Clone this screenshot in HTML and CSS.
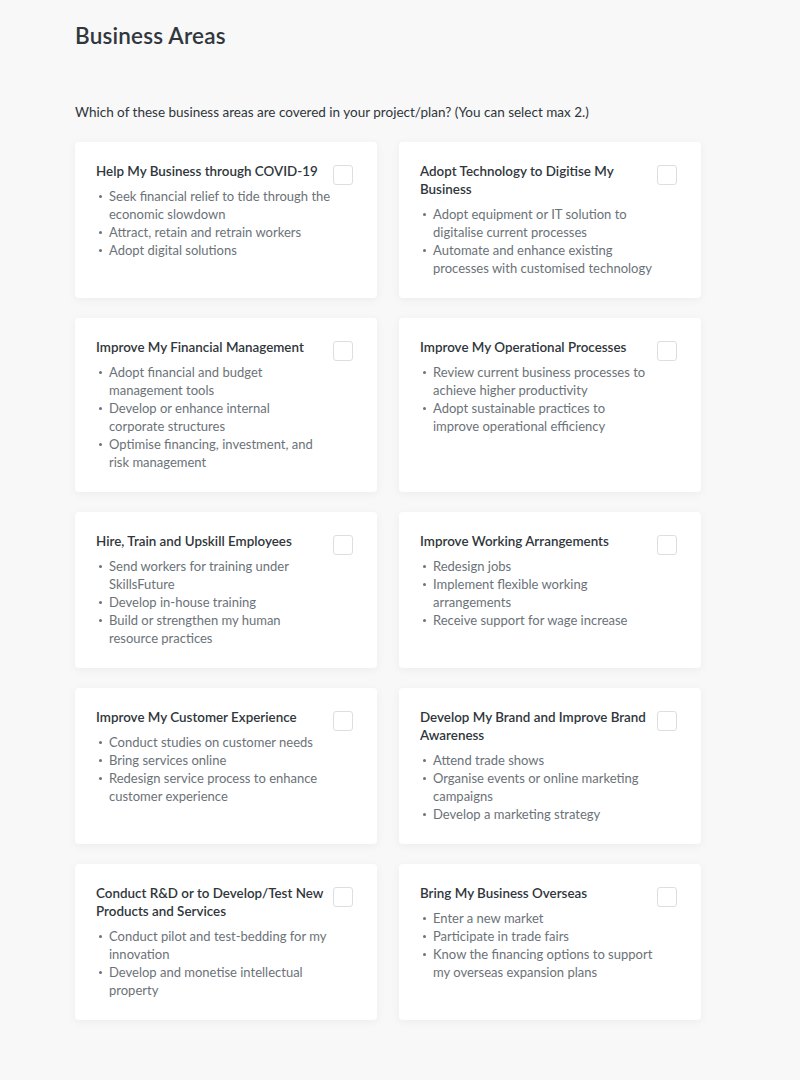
FILE: index.html
```html
<!DOCTYPE html>
<html lang="en">
<head>
<meta charset="utf-8">
<title>Business Areas</title>
<link rel="stylesheet" href="styles.css">
</head>
<body>
<main class="page">
  <h1 class="title">Business Areas</h1>
  <p class="question">Which of these business areas are covered in your project/plan? (You can select max 2.)</p>
  <div class="grid">
    <div class="card">
      <div class="card-body">
        <h2 class="card-title">Help My Business through COVID-19</h2>
        <ul class="list">
          <li>Seek financial relief to tide through the economic slowdown</li>
          <li>Attract, retain and retrain workers</li>
          <li>Adopt digital solutions</li>
        </ul>
      </div>
      <span class="check"></span>
    </div>
    <div class="card">
      <div class="card-body">
        <h2 class="card-title">Adopt Technology to Digitise My Business</h2>
        <ul class="list">
          <li>Adopt equipment or IT solution to digitalise current processes</li>
          <li>Automate and enhance existing processes with customised technology</li>
        </ul>
      </div>
      <span class="check"></span>
    </div>
    <div class="card">
      <div class="card-body">
        <h2 class="card-title">Improve My Financial Management</h2>
        <ul class="list">
          <li>Adopt financial and budget management tools</li>
          <li>Develop or enhance internal <span class="nw">corporate structures</span></li>
          <li>Optimise financing, investment, and risk management</li>
        </ul>
      </div>
      <span class="check"></span>
    </div>
    <div class="card">
      <div class="card-body">
        <h2 class="card-title">Improve My Operational Processes</h2>
        <ul class="list">
          <li>Review current business processes to achieve higher productivity</li>
          <li>Adopt sustainable practices to <span class="nw">improve operational efficiency</span></li>
        </ul>
      </div>
      <span class="check"></span>
    </div>
    <div class="card">
      <div class="card-body">
        <h2 class="card-title">Hire, Train and Upskill Employees</h2>
        <ul class="list">
          <li>Send workers for training under SkillsFuture</li>
          <li>Develop in-house training</li>
          <li>Build or strengthen my human resource practices</li>
        </ul>
      </div>
      <span class="check"></span>
    </div>
    <div class="card">
      <div class="card-body">
        <h2 class="card-title">Improve Working Arrangements</h2>
        <ul class="list">
          <li>Redesign jobs</li>
          <li>Implement flexible working arrangements</li>
          <li>Receive support for wage increase</li>
        </ul>
      </div>
      <span class="check"></span>
    </div>
    <div class="card">
      <div class="card-body">
        <h2 class="card-title">Improve My Customer Experience</h2>
        <ul class="list">
          <li>Conduct studies on customer needs</li>
          <li>Bring services online</li>
          <li>Redesign service process to enhance customer experience</li>
        </ul>
      </div>
      <span class="check"></span>
    </div>
    <div class="card">
      <div class="card-body">
        <h2 class="card-title">Develop My Brand and Improve Brand Awareness</h2>
        <ul class="list">
          <li>Attend trade shows</li>
          <li>Organise events or online marketing campaigns</li>
          <li>Develop a marketing strategy</li>
        </ul>
      </div>
      <span class="check"></span>
    </div>
    <div class="card">
      <div class="card-body">
        <h2 class="card-title">Conduct R&amp;D or to Develop/Test New Products and Services</h2>
        <ul class="list">
          <li>Conduct pilot and test-bedding for my innovation</li>
          <li>Develop and monetise intellectual property</li>
        </ul>
      </div>
      <span class="check"></span>
    </div>
    <div class="card">
      <div class="card-body">
        <h2 class="card-title">Bring My Business Overseas</h2>
        <ul class="list">
          <li>Enter a new market</li>
          <li>Participate in trade fairs</li>
          <li>Know the financing options to support my overseas expansion plans</li>
        </ul>
      </div>
      <span class="check"></span>
    </div>
  </div>
</main>
</body>
</html>
```

FILE: styles.css
```css
* { box-sizing: border-box; }
html, body {
  margin: 0;
  padding: 0;
  background: #f8f8f8;
}
body {
  font-family: "Lato", "Open Sans", sans-serif;
  color: #333a40;
}
.page {
  padding: 22px 0 60px 75px;
  width: 800px;
}
.title {
  margin: 0;
  font-size: 22.5px;
  font-weight: 600;
  line-height: 28px;
  color: #31373d;
  letter-spacing: 0.2px;
}
.question {
  margin: 52px 0 0;
  font-size: 13.5px;
  line-height: 20px;
  color: #2f353a;
}
.grid {
  margin-top: 20px;
  width: 626px;
  display: grid;
  grid-template-columns: 302px 302px;
  column-gap: 22px;
  row-gap: 20px;
}
.card {
  background: #fff;
  border-radius: 4px;
  box-shadow: 0 2px 10px rgba(0, 0, 0, 0.05);
  padding: 20px 24px 21px 21px;
  display: flex;
  align-items: flex-start;
  gap: 1px;
}
.card-body { flex: 1; }
.card-title {
  margin: 0;
  font-size: 13.4px;
  font-weight: 600;
  line-height: 18px;
  color: #30363b;
}
.list {
  list-style: none;
  margin: 7px 0 0;
  padding: 0;
}
.list li {
  position: relative;
  padding-left: 13px;
  font-size: 13px;
  line-height: 18px;
  color: #6b7278;
}
.list li::before {
  content: "";
  position: absolute;
  left: 3px;
  top: 8px;
  width: 3px;
  height: 3px;
  border-radius: 50%;
  background: #6b7278;
}
.nw { white-space: nowrap; }
.check {
  flex: none;
  width: 20px;
  height: 20px;
  margin-top: 3px;
  border: 1px solid #dcdfe2;
  border-radius: 3px;
  background: #fff;
}
```
